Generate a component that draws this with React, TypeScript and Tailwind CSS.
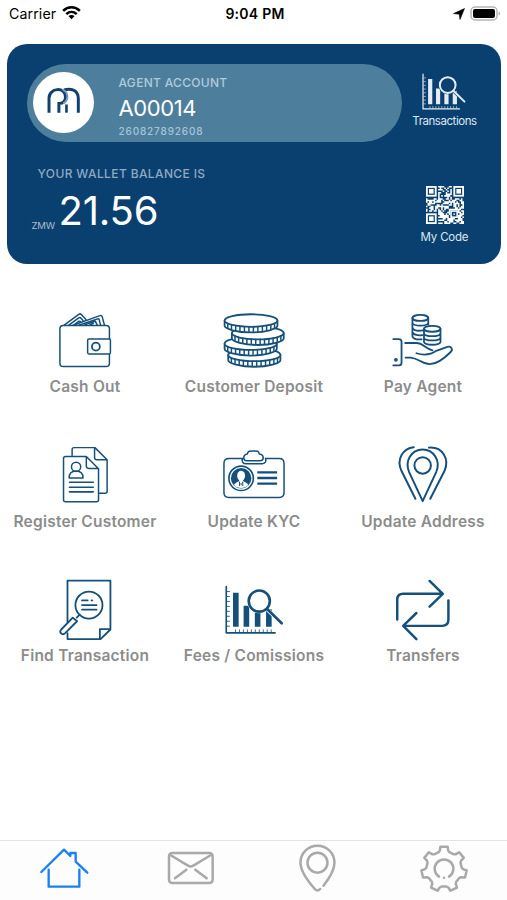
import type { ReactNode } from "react";

const NAVY = "#14507a";

/** Outline drawing shared by the action tiles. */
function TileIcon({
  viewBox,
  strokeWidth = 5,
  children,
}: {
  viewBox: string;
  strokeWidth?: number;
  children: ReactNode;
}) {
  return (
    <svg
      viewBox={viewBox}
      className="mr-px size-16 translate-x-[0.5px]"
      fill="none"
      stroke={NAVY}
      strokeWidth={strokeWidth}
      strokeLinecap="round"
      strokeLinejoin="round"
      aria-hidden="true"
    >
      {children}
    </svg>
  );
}

function WalletIcon() {
  return (
    <TileIcon viewBox="157.5 27 192 192" strokeWidth={4.5}>
      <path d="M192 76 236 43q5-3 8 1l14 15" />
      <path d="M206 76 236 54q4-3 7 1l6 7M222 75l14-11 5 1" />
      <path d="M219 76 300 47q5-2 7 3l7 26" />
      <path d="M236 76 293 57q4-1 5 2l4 16M254 75l32-11 6 11M270 75l10-4" />
      <rect x="179" y="77" width="150" height="124" rx="10" />
      <rect x="263" y="118" width="69" height="45" rx="4" fill="#fff" />
      <circle cx="288" cy="141" r="12" strokeWidth="5.5" />
    </TileIcon>
  );
}

const coins = [
  { x: 174, y: 166, w: 158 },
  { x: 163, y: 132, w: 158 },
  { x: 185, y: 100, w: 157 },
  { x: 163, y: 62, w: 160 },
];

function CoinsIcon() {
  return (
    <TileIcon viewBox="154.5 27 192 192" strokeWidth={5.5}>
      {coins.map(({ x, y, w }) => {
        const r = w / 2;
        return (
          <g key={y}>
            <path
              d={`M${x} ${y}v16c0 9 ${r * 0.45} 20 ${r} 20s${r} -11 ${r} -20v-16`}
              fill="#fff"
            />
            <ellipse cx={x + r} cy={y} rx={r} ry="19" fill="#fff" />
            {[-0.88, -0.74, -0.58, -0.42, -0.25, -0.08, 0.09, 0.26, 0.43, 0.59, 0.75, 0.89].map((t) => {
              const top = y + 19 * Math.sqrt(1 - t * t);
              return (
                <path key={t} strokeWidth="4.5" d={`M${x + r + t * r} ${top}v15`} />
              );
            })}
          </g>
        );
      })}
    </TileIcon>
  );
}

function PayAgentIcon() {
  return (
    <TileIcon viewBox="661.5 27 192 192" strokeWidth={5.5}>
      <ellipse cx="751" cy="54" rx="24" ry="9" />
      <path d="M727 54v56c2 7 14 10 28 9M775 54v20M727 69c3 11 45 11 48 0M727 83c3 9 18 11 32 9M727 97c3 9 18 11 30 9" />
      <ellipse cx="787" cy="87" rx="25" ry="9" />
      <path d="M762 87v40c3 11 47 11 50 0V87M762 101c3 11 47 11 50 0M762 114c3 11 47 11 50 0" />
      <path d="M669 118h17q8 0 8 8v64q0 8-8 8h-17" />
      <circle cx="677" cy="181" r="3" fill={NAVY} />
      <path d="M705 130h35c20 0 24 16 48 22M739 161c24 8 46 3 62-8l32-11c12-4 18 8 9 16-20 20-40 36-62 36-24 0-32-17-58-20h-16" />
    </TileIcon>
  );
}

function RegisterIcon() {
  return (
    <TileIcon viewBox="157.5 24 192 192" strokeWidth={4.5}>
      <path d="M216 62V44q0-6 6-6h63l37 37v95q0 6-6 6h-18M284 39v29q0 7 7 7h30" />
      <path d="M196 65h63l37 37v94q0 6-6 6h-94q-6 0-6-6V71q0-6 6-6ZM259 66v28q0 7 7 7h29" />
      <circle cx="228" cy="96" r="14" />
      <path d="M207 130c0-15 7-21 21-21s21 6 21 21Z" />
      <path d="M208 143h72M208 158h72M208 172h72" strokeWidth="5" />
    </TileIcon>
  );
}

function KycIcon() {
  return (
    <TileIcon viewBox="64.5 24 192 192" strokeWidth={4.5}>
      <path d="M127 71H86q-15 0-15 15v89q0 14 15 14h152q15 0 15-14V86q0-15-15-15h-41" />
      <path d="M127 71c-3 11 3 16 11 16h48c9 0 14-6 11-16" />
      <path d="M142 57c1-9 7-9 18-9s17 0 18 9c9 1 12 5 12 12 0 6-3 9-10 9h-40c-6 0-9-3-9-9 0-7 3-11 11-12Z" />
      <circle cx="123" cy="131" r="37" strokeWidth="5" />
      <circle cx="123" cy="131" r="31" fill={NAVY} stroke="none" />
      <ellipse cx="123" cy="123" rx="12" ry="15" fill="#fff" stroke="none" />
      <path d="M101 151c4-8 12-8 16-12v-7h12v7c4 4 12 4 16 12-11 12-33 12-44 0Z" fill="#fff" stroke="none" />
      <path d="M118 142v11M128 142v11M123 146v5" strokeWidth="3" />
      <path d="M172 113h60M172 130h60M172 147h60" strokeWidth="7" strokeLinecap="butt" />
    </TileIcon>
  );
}

function AddressIcon() {
  return (
    <TileIcon viewBox="571.5 24 192 192" strokeWidth={6}>
      <circle cx="668" cy="92" r="25" />
      <path d="M668 200 627 112c-14-32 6-68 41-68s55 36 41 68Z" />
      <path d="M641 37c-32 3-54 36-37 72l42 84M687 38c42-3 63 35 47 71l-43 84" />
    </TileIcon>
  );
}

function FindIcon() {
  return (
    <TileIcon viewBox="157.5 21 192 192" strokeWidth={5.5}>
      <path d="M202 154V29h130v148l-30 29H202v-18M300 205v-29h31" />
      <circle cx="267" cy="103" r="41" fill="#fff" />
      <path d="M246 89h17M275 89h2M246 103h44M246 117h44M239 132l-9 9" />
      <path d="m218 141 13 11-36 36c-9 8-20-2-12-11Z" fill="#fff" />
    </TileIcon>
  );
}

/** Bar chart under a magnifier; `cutout` is the colour behind the lens. */
function ChartLens({ cutout }: { cutout: string }) {
  return (
    <>
      <path d="M138 47v140h148" strokeWidth="5" />
      <path
        d="M141 62h7M141 77h7M141 92h7M141 107h7M141 122h7M141 137h7M141 152h7M141 167h7M166 184v-6M178 184v-6M190 184v-6M202 184v-6M214 184v-6M226 184v-6M238 184v-6M250 184v-6M262 184v-6M274 184v-6"
        strokeWidth="2.5"
      />
      <path
        d="M167 66v103M199 105v64M233 120v49M267 116v53"
        strokeWidth="17"
        strokeLinecap="butt"
      />
      <circle cx="238" cy="91" r="37" fill={cutout} stroke="none" />
      <path d="m262 116 45 43" stroke={cutout} strokeWidth="12" strokeLinecap="butt" />
      <circle cx="238" cy="91" r="32" strokeWidth="8" />
      <path d="m261 114 45 44" strokeWidth="8" />
    </>
  );
}

function FeesIcon() {
  return (
    <TileIcon viewBox="124.5 21 192 192">
      <ChartLens cutout="#fff" />
    </TileIcon>
  );
}

function TransfersIcon() {
  return (
    <TileIcon viewBox="631.5 21 192 192" strokeWidth={7.5}>
      <path d="M651 147V87q0-18 18-18h118M749 30l40 39-40 39" />
      <path d="M806 89v58q0 19-19 19H671M709 127l-40 39 40 40" />
    </TileIcon>
  );
}

function LogoMark() {
  return (
    <svg
      viewBox="54 60 104 82"
      className="mb-[4px] h-[27px] w-[35px]"
      fill="none"
      strokeWidth="9"
      aria-hidden="true"
    >
      <path d="M115 138v-25" stroke="#12406e" strokeWidth="8" />
      <path d="M108 69c18-6 43-1 43 26v43" stroke="#12406e" />
      <path d="M62 138V94c0-32 50-36 50-4 0 14-8 20-20 20v28" stroke="#12406e" />
      <path d="M103 68c20 8 19 34 2 42" stroke="#7f9bba" strokeWidth="6" />
    </svg>
  );
}

const QR_SIZE = 25;

function inFinder(x: number, y: number) {
  const near = (n: number) => n < 8;
  const far = (n: number) => n > QR_SIZE - 9;
  return (near(x) && near(y)) || (far(x) && near(y)) || (near(x) && far(y));
}

function QrCode() {
  let data = "";
  let seed = 2608;
  for (let y = 0; y < QR_SIZE; y++) {
    for (let x = 0; x < QR_SIZE; x++) {
      seed = (seed * 1103515 + 12345) % 2147483;
      if (!inFinder(x, y) && seed % 100 < 60) data += `M${x} ${y}h1v1h-1z`;
    }
  }
  return (
    <svg viewBox="0 0 25 25" className="size-[38px]" aria-label="QR code">
      <path d={data} fill="#fff" />
      {[
        [0, 0],
        [18, 0],
        [0, 18],
      ].map(([x, y]) => (
        <g key={`${x}-${y}`}>
          <rect x={x + 0.6} y={y + 0.6} width="5.8" height="5.8" fill="none" stroke="#fff" strokeWidth="1.2" />
          <rect x={x + 2} y={y + 2} width="3" height="3" fill="#fff" />
        </g>
      ))}
      <rect x="16" y="16" width="5" height="5" fill="#0a406f" />
      <rect x="16.5" y="16.5" width="4" height="4" fill="none" stroke="#fff" />
      <rect x="18" y="18" width="1" height="1" fill="#fff" />
    </svg>
  );
}

function StatusBar() {
  return (
    <header className="grid h-[27px] grid-cols-3 items-center pr-[6px] pl-[9px] text-black">
      <div className="flex items-center gap-[6px]">
        <span className="text-[14.2px] tracking-[0.1px]">Carrier</span>
        <svg viewBox="0 0 20 15" className="mb-px h-[15px] w-[19px]" aria-hidden="true">
          <g fill="none" stroke="#000" strokeWidth="2.7">
            <path d="M1.2 5.7c5-5 12.6-5 17.6 0" />
            <path d="M4.5 9.2c3.2-3 7.8-3 11 0" />
          </g>
          <path d="M6.8 11.3c2-1.7 4.4-1.7 6.4 0L10 14.6Z" />
        </svg>
      </div>
      <span className="text-center text-[14px] font-semibold tracking-[0.25px] whitespace-nowrap">
        9:04 PM
      </span>
      <div className="flex items-center justify-end gap-[5px]">
        <svg viewBox="0 0 12 12" className="size-[12px]" aria-hidden="true">
          <path d="M11.5.5 7 11.5 6.3 6.2.5 5.6Z" stroke="#000" strokeWidth=".6" />
        </svg>
        <svg viewBox="0 0 31 15" className="h-[15px] w-[31px]" aria-hidden="true">
          <rect x="1" y="1" width="26" height="13" rx="4" fill="#fff" stroke="#b5b5b5" strokeWidth="1.5" />
          <rect x="3" y="3" width="22" height="9" rx="2" />
          <path d="M28.5 5.5c2.2.5 2.2 3.5 0 4Z" fill="#b5b5b5" />
        </svg>
      </div>
    </header>
  );
}

function WalletCard() {
  return (
    <section className="mt-[16.5px] mr-[6px] ml-[7px] flex h-[220px] flex-col rounded-[20px] bg-[#0a406f] pt-[20px] pl-[19.5px] text-white">
      <div className="flex">
        <div className="flex h-[78px] w-[375.5px] items-center rounded-full bg-[#4d7f9d] pl-[6px]">
          <div className="flex size-[61px] items-center justify-center rounded-full bg-white">
            <LogoMark />
          </div>
          <div className="ml-[25px] flex flex-col pt-[9px]">
            <span className="text-[12px] leading-[16px] font-medium tracking-[0.3px] text-[#b0cadb]">
              AGENT ACCOUNT
            </span>
            <span className="mt-[3px] text-[22px] leading-[28px] tracking-[-0.4px]">A00014</span>
            <span className="mt-[1px] text-[10px] leading-[16px] font-medium tracking-[0.85px] text-[#a5c3d6]">
              260827892608
            </span>
          </div>
        </div>
        <div className="flex w-[85px] flex-col items-center pt-[9px]">
          <svg
            viewBox="134 42 178 150"
            className="mr-[2px] h-[37px] w-[44px]"
            fill="none"
            stroke="#e4edf5"
            strokeLinecap="round"
            aria-hidden="true"
          >
            <ChartLens cutout="#0a406f" />
          </svg>
          <span className="mt-[3px] text-[11.5px] leading-[16px] tracking-[-0.45px] text-[#dce7f0]">
            Transactions
          </span>
        </div>
      </div>
      <div className="mt-[23px] flex">
        <div className="w-[375.5px]">
          <div className="pl-[11px] text-[12px] leading-[18px] font-medium tracking-[0.38px] text-[#8eaac3]">
            YOUR WALLET BALANCE IS
          </div>
          <div className="flex items-baseline pt-px pl-[5px]">
            <span className="relative top-[4px] w-[27px] text-[9.5px] tracking-[-0.2px] text-[#a9bfd2]">
              ZMW
            </span>
            <span className="text-[40px] leading-[54px] font-[380] tracking-[-0.2px]">21.56</span>
          </div>
        </div>
        <div className="flex w-[85px] flex-col items-center pt-[21px]">
          <QrCode />
          <span className="mt-[5px] text-[11.5px] leading-[16px] tracking-[-0.2px] text-[#dce7f0]">
            My Code
          </span>
        </div>
      </div>
    </section>
  );
}

const actions = [
  { label: "Cash Out", Icon: WalletIcon },
  { label: "Customer Deposit", Icon: CoinsIcon },
  { label: "Pay Agent", Icon: PayAgentIcon },
  { label: "Register Customer", Icon: RegisterIcon },
  { label: "Update KYC", Icon: KycIcon },
  { label: "Update Address", Icon: AddressIcon },
  { label: "Find Transaction", Icon: FindIcon },
  { label: "Fees / Comissions", Icon: FeesIcon },
  { label: "Transfers", Icon: TransfersIcon },
];

function gearPath(cx: number, cy: number) {
  const step = (Math.PI * 2) / 7;
  const points: string[] = [];
  for (let i = 0; i < 7; i++) {
    const mid = i * step - Math.PI / 2;
    for (const [offset, r] of [
      [-0.31, 53],
      [-0.22, 57],
      [-0.16, 68],
      [0.16, 68],
      [0.22, 57],
      [0.31, 53],
    ]) {
      const a = mid + offset;
      points.push(`${(cx + r * Math.cos(a)).toFixed(1)} ${(cy + r * Math.sin(a)).toFixed(1)}`);
    }
  }
  return `M${points.join("L")}Z`;
}

const tabs = [
  {
    name: "Home",
    viewBox: "94 33 192 162",
    active: true,
    art: <path d="m125 126 68-67 19 19v-9h16v26l35 33M147 119v51h92v-51" />,
  },
  {
    name: "Messages",
    viewBox: "474 33 192 162",
    art: (
      <>
        <rect x="507" y="69" width="131" height="90" rx="10" />
        <path d="m511 75 53 32q8 5 16 0l53-32M525 145l34-26M586 119l34 26" />
      </>
    ),
  },
  {
    name: "Locations",
    viewBox: "854.6 33 192 162",
    art: (
      <>
        <circle cx="952" cy="98" r="30" />
        <path d="M960 177q-8 9-16 0c-20-23-43-53-43-79a51 51 0 0 1 102 0c0 22-15 46-33 69" />
      </>
    ),
  },
  {
    name: "Settings",
    viewBox: "1234.9 33 192 162",
    art: (
      <>
        <path d={gearPath(1331, 117)} />
        <path d="M1316 140a28 28 0 1 1 30 0M1331 143v.1" />
      </>
    ),
  },
];

export default function App() {
  return (
    <div className="flex h-[900px] w-[507px] flex-col overflow-hidden bg-white font-['Inter','Liberation_Sans',sans-serif]">
      <StatusBar />
      <WalletCard />
      <main className="grid grid-cols-3 gap-y-[46px] pt-[45.5px]">
        {actions.map(({ label, Icon }) => (
          <button key={label} className="flex h-[88.4px] flex-col items-center">
            <Icon />
            <span className="mt-[5px] ml-px text-[15.5px] leading-[20px] font-semibold tracking-[0.22px] whitespace-nowrap text-[#8c8c8c]">
              {label}
            </span>
          </button>
        ))}
      </main>
      <nav className="mt-auto grid h-[60px] grid-cols-4 border-t border-[#e2e2e2] bg-[#fdfdfd]">
        {tabs.map(({ name, viewBox, active, art }) => (
          <button key={name} aria-label={name} className="flex justify-center">
            <svg
              viewBox={viewBox}
              className={active ? "h-[54px] w-16 text-[#1a80f5]" : "h-[54px] w-16 text-[#a9a9a9]"}
              fill="none"
              stroke="currentColor"
              strokeWidth={active ? 7 : 7.5}
              strokeLinecap="round"
              strokeLinejoin="round"
            >
              {art}
            </svg>
          </button>
        ))}
      </nav>
    </div>
  );
}
